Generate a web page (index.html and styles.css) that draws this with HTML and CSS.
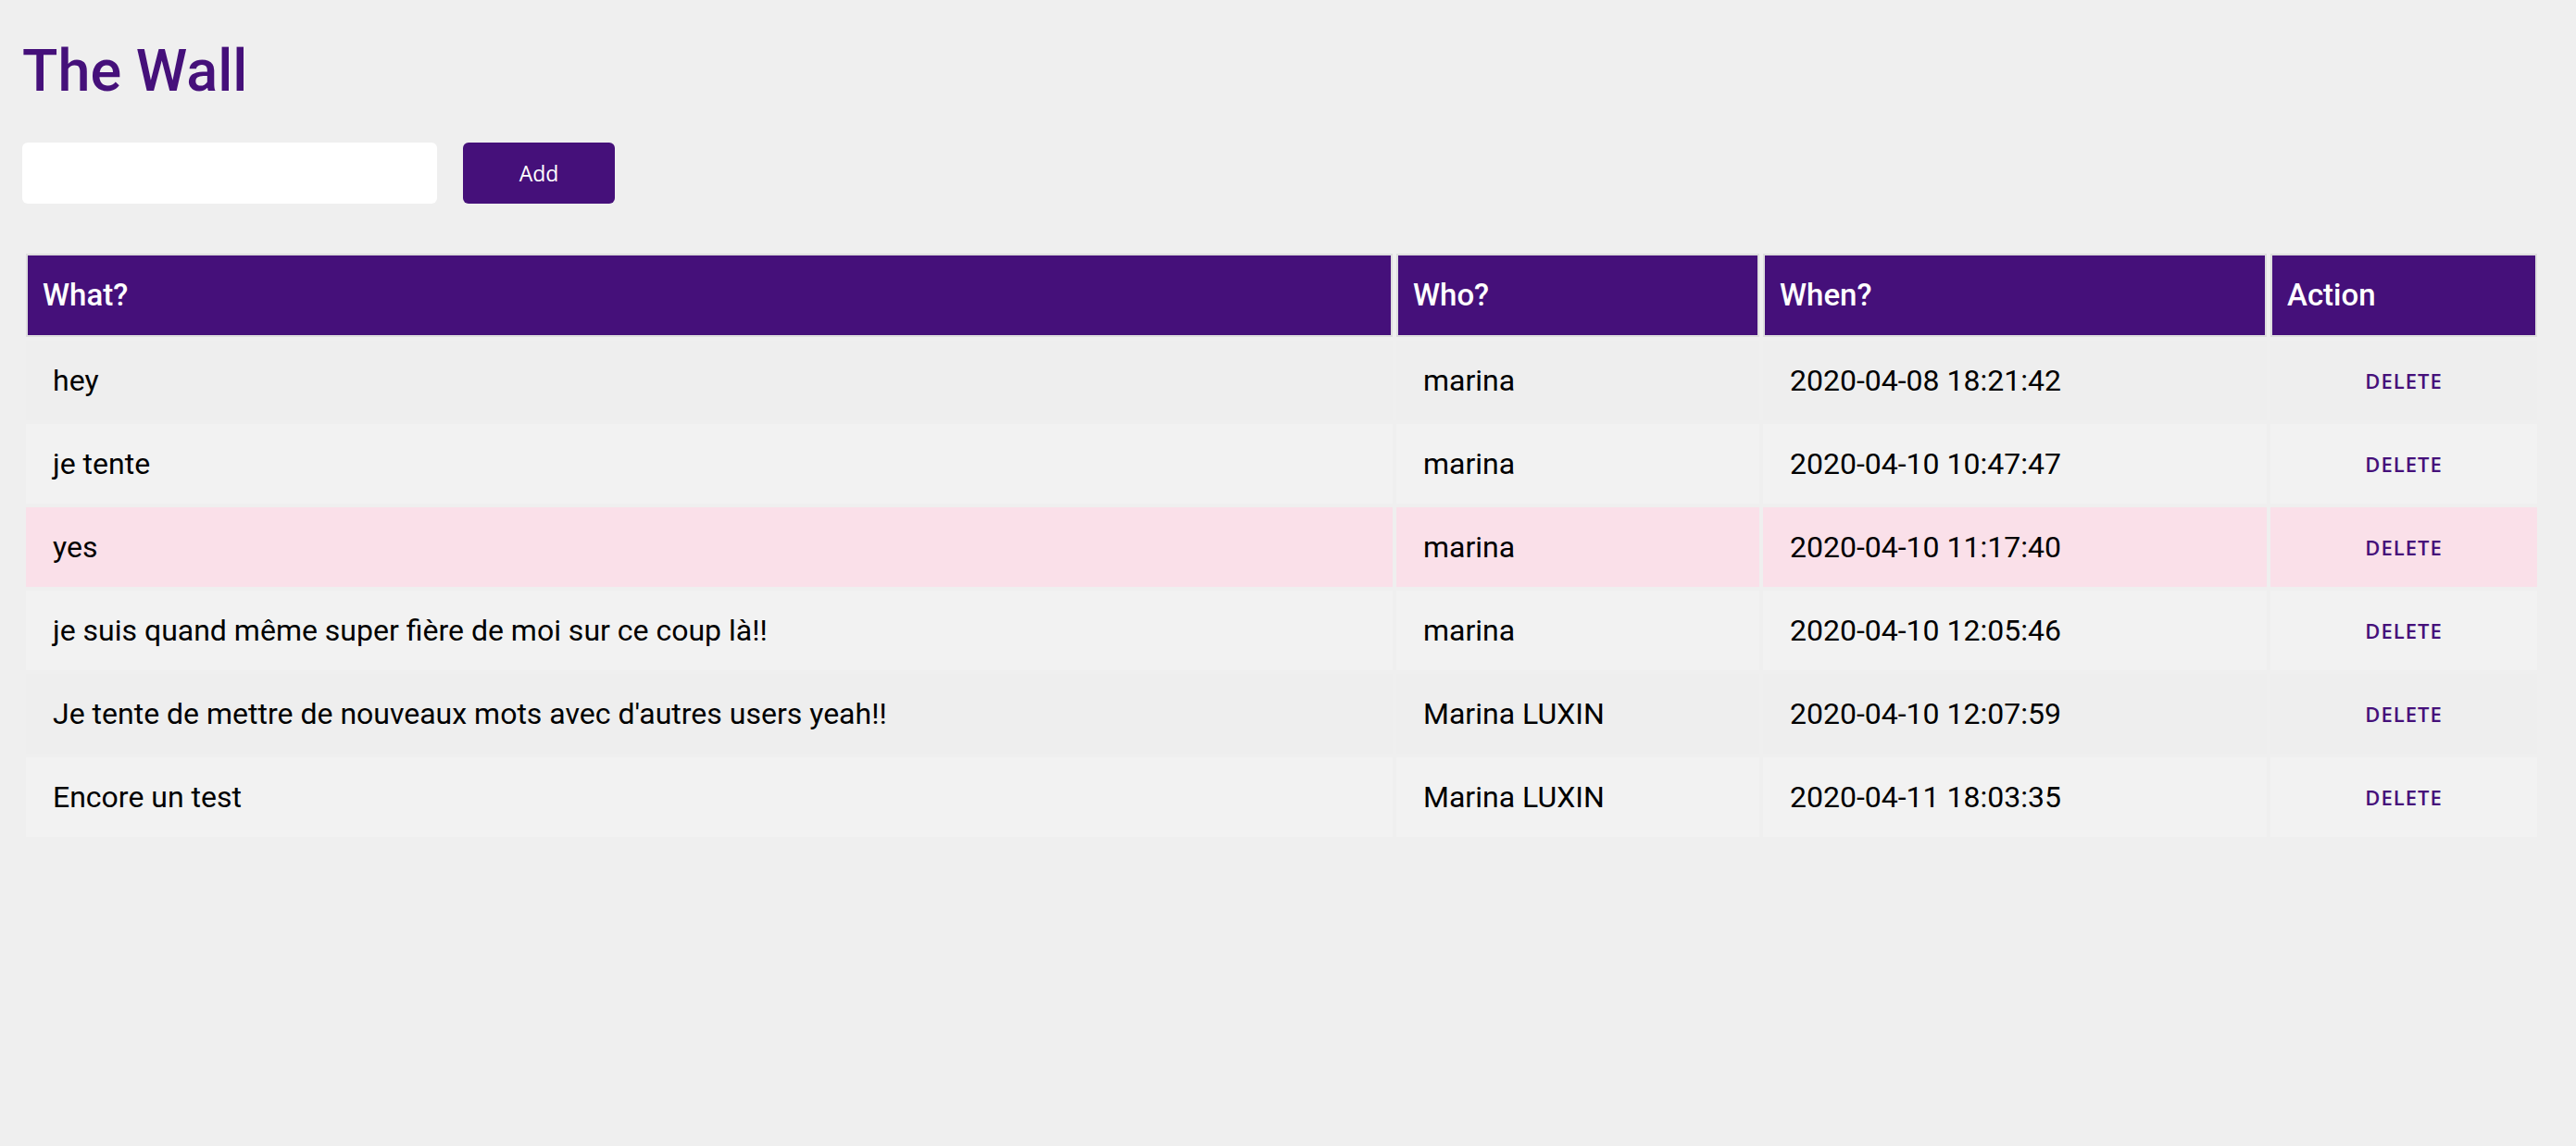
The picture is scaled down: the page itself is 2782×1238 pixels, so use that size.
FILE: index.html
```html
<!DOCTYPE html>
<html lang="fr">
<head>
<meta charset="utf-8">
<title>The Wall</title>
<link rel="stylesheet" href="styles.css">
</head>
<body>
<main class="page">
  <h1 class="title">The Wall</h1>
  <form class="add-form">
    <input class="add-input" type="text" aria-label="Message">
    <button class="add-btn" type="button">Add</button>
  </form>
  <table class="wall">
    <thead>
      <tr>
        <th class="col-what">What?</th>
        <th class="col-who">Who?</th>
        <th class="col-when">When?</th>
        <th class="col-action">Action</th>
      </tr>
    </thead>
    <tbody>
      <tr class="row-odd">
        <td>hey</td><td>marina</td><td>2020-04-08 18:21:42</td><td class="act"><button class="del-btn" type="button">Delete</button></td>
      </tr>
      <tr class="row-even">
        <td>je tente</td><td>marina</td><td>2020-04-10 10:47:47</td><td class="act"><button class="del-btn" type="button">Delete</button></td>
      </tr>
      <tr class="row-hover">
        <td>yes</td><td>marina</td><td>2020-04-10 11:17:40</td><td class="act"><button class="del-btn" type="button">Delete</button></td>
      </tr>
      <tr class="row-even">
        <td>je suis quand même super fière de moi sur ce coup là!!</td><td>marina</td><td>2020-04-10 12:05:46</td><td class="act"><button class="del-btn" type="button">Delete</button></td>
      </tr>
      <tr class="row-odd">
        <td>Je tente de mettre de nouveaux mots avec d'autres users yeah!!</td><td>Marina LUXIN</td><td>2020-04-10 12:07:59</td><td class="act"><button class="del-btn" type="button">Delete</button></td>
      </tr>
      <tr class="row-even">
        <td>Encore un test</td><td>Marina LUXIN</td><td>2020-04-11 18:03:35</td><td class="act"><button class="del-btn" type="button">Delete</button></td>
      </tr>
    </tbody>
  </table>
</main>
</body>
</html>
```
FILE: styles.css
```css
html, body {
  margin: 0;
  padding: 0;
}

body {
  background: #efefef;
  font-family: Roboto, "Liberation Sans", sans-serif;
  color: #000;
}

.page {
  padding: 37px 24px 0 24px;
}

.title {
  margin: 0;
  font-family: Roboto, sans-serif;
  font-weight: 500;
  font-size: 63px;
  line-height: 80px;
  color: #45107a;
}

.add-form {
  display: flex;
  gap: 28px;
  margin-top: 37px;
}

.add-input {
  box-sizing: border-box;
  width: 448px;
  height: 66px;
  border: none;
  border-radius: 6px;
  background: #fff;
  padding: 0 16px;
  font-size: 28px;
  outline: none;
}

.add-btn {
  box-sizing: border-box;
  width: 164px;
  height: 66px;
  border: none;
  border-radius: 6px;
  background: #45107a;
  color: #fff;
  font-family: "Open Sans", sans-serif;
  font-size: 23px;
  font-weight: 400;
  padding: 0;
}

.wall {
  margin-top: 50px;
  width: 2720px;
  table-layout: fixed;
  border-collapse: separate;
  border-spacing: 4px;
}

.wall th,
.wall td {
  box-sizing: border-box;
  text-align: left;
  vertical-align: middle;
}

.wall th {
  background: #45107a;
  border: 2px solid #dedede;
  color: #fff;
  font-weight: 500;
  font-size: 33px;
  line-height: 40px;
  padding: 23px 16px;
}

.col-what { width: 1476px; }
.col-who { width: 392px; }
.col-when { width: 544px; }
.col-action { width: 288px; }

.wall td {
  height: 86px;
  font-size: 32px;
  line-height: 40px;
  padding: 0 29px;
  white-space: nowrap;
}

.row-odd td { background: #eeeeee; }
.row-even td { background: #f2f2f2; }
.row-hover td { background: #fae0e9; }

.wall td.act {
  text-align: center;
  padding-left: 0;
  padding-right: 0;
}

.del-btn {
  display: block;
  margin: 0 auto;
  height: 40px;
  border: none;
  background: transparent;
  padding: 0;
  color: #45107a;
  font-family: "Open Sans", sans-serif;
  font-weight: 600;
  font-size: 22px;
  letter-spacing: 1px;
  text-transform: uppercase;
  line-height: 40px;
}
```
